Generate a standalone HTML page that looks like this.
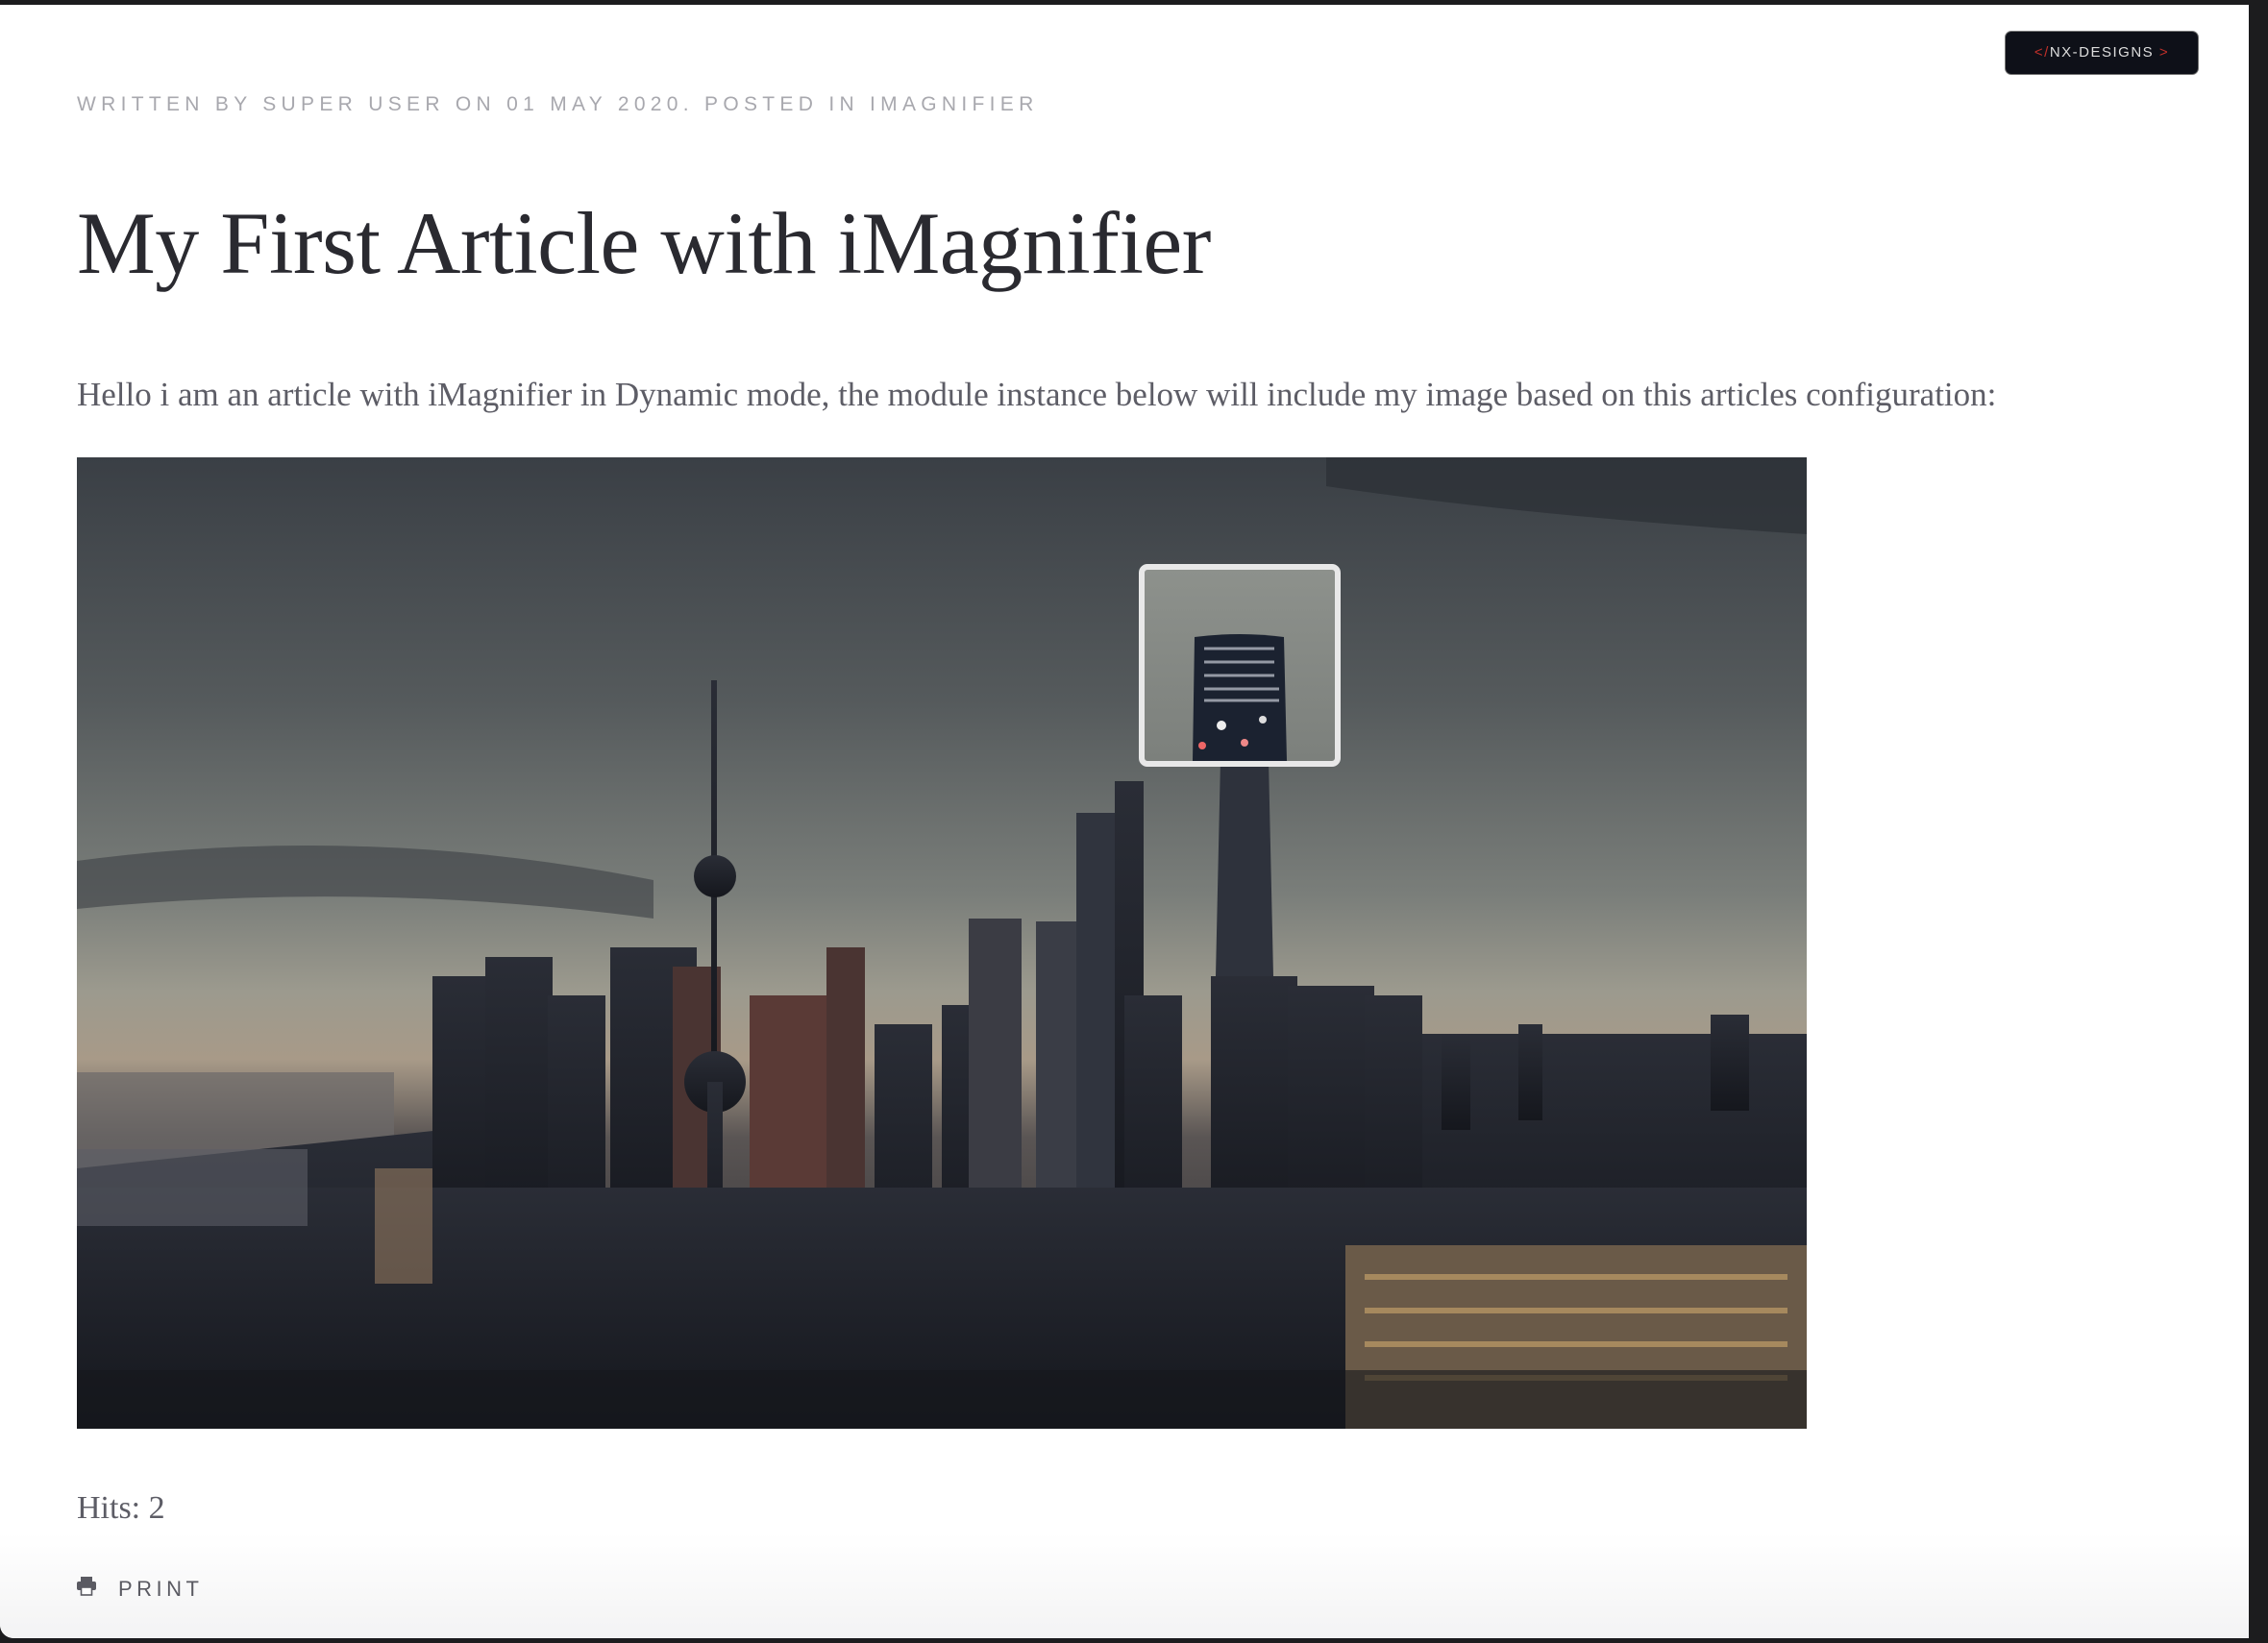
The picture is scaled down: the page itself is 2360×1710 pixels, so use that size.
<!DOCTYPE html>
<html><head><meta charset="utf-8"><style>
html,body{margin:0;padding:0;width:2360px;height:1710px;overflow:hidden;background:#1c1c1e}
.card{position:absolute;left:0;top:5px;width:2340px;height:1700px;background:#fff;border-radius:0 0 0 14px;overflow:hidden}
.shade{position:absolute;left:0;right:0;bottom:0;height:110px;background:linear-gradient(#fff,#f3f3f4)}
.meta{position:absolute;left:80px;top:92px;font:21px "Liberation Sans",sans-serif;letter-spacing:5.3px;color:#a8a8ae;white-space:nowrap}
h1{position:absolute;left:80px;top:195px;margin:0;font:400 92px "Liberation Serif",serif;color:#2a2a30;white-space:nowrap;letter-spacing:-0.5px}
p{position:absolute;left:80px;top:386px;margin:0;font:35px "Liberation Serif",serif;color:#5d5d66;white-space:nowrap}
.img{position:absolute;left:80px;top:471px;width:1800px;height:1011px}
.hits{position:absolute;left:80px;top:1546px;font:34px "Liberation Serif",serif;color:#5d5d66}
.print{position:absolute;left:123px;top:1636px;font:22px "Liberation Sans",sans-serif;letter-spacing:4.5px;color:#5a5a62}
.logo{position:absolute;left:2086px;top:27px;width:200px;height:44px;background:#0e1018;border-radius:7px;border:1px solid #777;color:#ddd;font:15px "Liberation Sans",sans-serif;letter-spacing:1.5px;text-align:center;line-height:44px}
.logo b{color:#c0302a;font-weight:normal}
.mag{position:absolute;left:1185px;top:582px;width:198px;height:199px;border:6px solid #e8e8e8;border-radius:9px;background:linear-gradient(#8d918c,#7c807c);overflow:hidden}
</style></head><body>
<div class="card">
<div class="shade"></div>
<div class="logo"><b>&lt;/</b>NX-DESIGNS <b>&gt;</b></div>
<div class="meta">WRITTEN BY SUPER USER ON 01 MAY 2020. POSTED IN IMAGNIFIER</div>
<h1>My First Article with iMagnifier</h1>
<p>Hello i am an article with iMagnifier in Dynamic mode, the module instance below will include my image based on this articles configuration:</p>
<svg class="img" viewBox="0 0 1800 1011" preserveAspectRatio="none">
<defs>
<linearGradient id="sky" x1="0" y1="0" x2="0" y2="1">
<stop offset="0" stop-color="#3a3f45"/><stop offset="0.25" stop-color="#555a5c"/><stop offset="0.45" stop-color="#7a7e7a"/><stop offset="0.55" stop-color="#9c9a8e"/><stop offset="0.62" stop-color="#a89a88"/><stop offset="0.7" stop-color="#5a5554"/><stop offset="1" stop-color="#1a1c22"/>
</linearGradient>
<linearGradient id="city" x1="0" y1="0" x2="0" y2="1"><stop offset="0" stop-color="#2a2d36"/><stop offset="1" stop-color="#15171d"/></linearGradient>
</defs>
<rect width="1800" height="1011" fill="url(#sky)"/>
<path d="M0 420 Q300 380 600 440 L600 480 Q300 440 0 470Z" fill="#3c4045" opacity=".6"/>
<path d="M1300 0 H1800 V80 Q1500 60 1300 30Z" fill="#2b2f35" opacity=".7"/>
<rect x="0" y="640" width="330" height="120" fill="#6c6a6a" opacity=".7"/>
<g fill="url(#city)">
<path d="M0 740 L380 700 L380 1011 L0 1011Z"/>
<rect x="370" y="540" width="60" height="300"/><rect x="425" y="520" width="70" height="320"/>
<rect x="490" y="560" width="60" height="300"/><rect x="555" y="510" width="90" height="330"/>
<rect x="620" y="530" width="50" height="300" fill="#4a3432"/>
<rect x="700" y="560" width="80" height="300" fill="#5a3a36"/><rect x="780" y="510" width="40" height="330" fill="#4a3432"/>
<rect x="830" y="590" width="60" height="300"/><rect x="900" y="570" width="40" height="300"/>
<rect x="928" y="480" width="55" height="360" fill="#3b3c44"/>
<rect x="998" y="483" width="52" height="360" fill="#3a3d46"/>
<rect x="1040" y="370" width="45" height="450" fill="#30343e"/><rect x="1080" y="337" width="30" height="500"/>
<rect x="1090" y="560" width="60" height="300"/>
<path d="M1190 315 L1240 315 L1245 540 L1185 540Z" fill="#2e323c"/>
<rect x="1180" y="540" width="90" height="300"/><rect x="1260" y="550" width="90" height="300"/>
<rect x="1340" y="560" width="60" height="300"/><rect x="1400" y="600" width="400" height="300"/>
<rect x="1420" y="600" width="30" height="100"/><rect x="1500" y="590" width="25" height="100"/><rect x="1700" y="580" width="40" height="100"/>
<rect x="660" y="232" width="6" height="420"/><circle cx="664" cy="436" r="22"/><circle cx="664" cy="650" r="32"/><rect x="656" y="650" width="16" height="200"/>
<rect x="0" y="760" width="1800" height="251"/>
</g>
<rect x="0" y="720" width="240" height="80" fill="#5b5e66" opacity=".6"/>
<rect x="1320" y="820" width="480" height="191" fill="#6a5a48"/>
<g fill="#d8b070" opacity=".55">
<rect x="1340" y="850" width="440" height="6"/><rect x="1340" y="885" width="440" height="6"/><rect x="1340" y="920" width="440" height="6"/><rect x="1340" y="955" width="440" height="6"/>
</g>
<rect x="310" y="740" width="60" height="120" fill="#a88868" opacity=".5"/>
<rect x="0" y="950" width="1800" height="61" fill="#16181d" opacity=".6"/>
</svg>
<div class="mag"><svg width="198" height="199"><path d="M52 70 Q100 64 145 70 L148 199 L50 199Z" fill="#1b2230"/><g stroke="#c8ccd6" stroke-width="3" opacity=".7"><line x1="62" y1="82" x2="135" y2="82"/><line x1="62" y1="96" x2="135" y2="96"/><line x1="62" y1="110" x2="135" y2="110"/><line x1="62" y1="124" x2="140" y2="124"/><line x1="62" y1="136" x2="140" y2="136"/></g><circle cx="80" cy="162" r="5" fill="#eee"/><circle cx="123" cy="156" r="4" fill="#ddd"/><circle cx="60" cy="183" r="4" fill="#e66"/><circle cx="104" cy="180" r="4" fill="#e88"/></svg></div>
<div class="hits">Hits: 2</div>
<svg style="position:absolute;left:80px;top:1636px" width="20" height="20" viewBox="0 0 20 20"><rect x="4" y="0" width="12" height="5" fill="#5a5a62"/><rect x="0" y="5" width="20" height="9" rx="2" fill="#5a5a62"/><rect x="4.5" y="11" width="11" height="8" fill="#fff" stroke="#5a5a62" stroke-width="1.6"/></svg>
<div class="print">PRINT</div>
</div>
</body></html>
